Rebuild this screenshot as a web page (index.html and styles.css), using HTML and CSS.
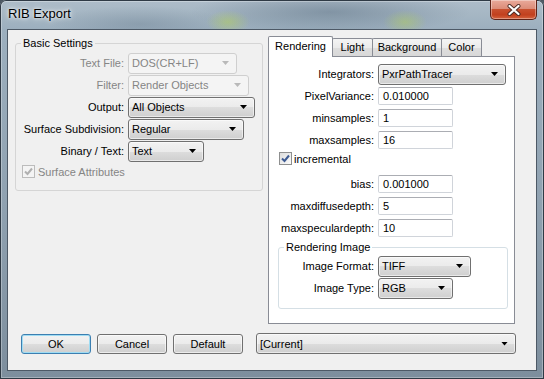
FILE: index.html
```html
<!DOCTYPE html>
<html lang="en">
<head>
    <meta charset="UTF-8">
    <title>RIB Export</title>
    <link rel="stylesheet" href="styles.css">
</head>
<body>
    <div class="window">
        <div class="titlebar">
            <div class="title">RIB Export</div>
            <div class="close-btn">
                <svg width="14" height="12" viewBox="0 0 14 12">
                    <path d="M2.5 2 L11.5 10 M11.5 2 L2.5 10" stroke="#4a2a24" stroke-width="4" stroke-linecap="round"/>
                    <path d="M2.5 2 L11.5 10 M11.5 2 L2.5 10" stroke="#fff" stroke-width="2.2" stroke-linecap="round"/>
                </svg>
            </div>
        </div>

        <div class="client">
            <div class="main">
                <fieldset class="group basic">
                    <legend>Basic Settings</legend>
                    <div class="form-grid">
                        <span class="label disabled">Text File:</span>
                        <div class="combo disabled" style="width: 109px"><span>DOS(CR+LF)</span><i class="arrow"></i></div>

                        <span class="label disabled">Filter:</span>
                        <div class="combo disabled" style="width: 121px"><span>Render Objects</span><i class="arrow"></i></div>

                        <span class="label">Output:</span>
                        <div class="combo" style="width: 127px"><span>All Objects</span><i class="arrow"></i></div>

                        <span class="label">Surface Subdivision:</span>
                        <div class="combo" style="width: 116px"><span>Regular</span><i class="arrow"></i></div>

                        <span class="label">Binary / Text:</span>
                        <div class="combo" style="width: 76px"><span>Text</span><i class="arrow"></i></div>

                        <label class="check-row disabled">
                            <span class="checkbox">
                                <svg width="11" height="11" viewBox="0 0 11 11"><path d="M2 5.5 L4.5 8 L9 2.5" fill="none" stroke-width="2"/></svg>
                            </span>
                            Surface Attributes
                        </label>
                    </div>
                </fieldset>

                <div class="tabs">
                    <div class="tab-strip">
                        <div class="tab active" style="width: 65px">Rendering</div>
                        <div class="tab" style="width: 41px">Light</div>
                        <div class="tab" style="width: 70px">Background</div>
                        <div class="tab" style="width: 41px">Color</div>
                    </div>
                    <div class="tab-panel">
                        <div class="panel-grid">
                            <span class="label">Integrators:</span>
                            <div class="combo" style="width: 128px"><span>PxrPathTracer</span><i class="arrow"></i></div>

                            <span class="label">PixelVariance:</span>
                            <div class="textbox">0.010000</div>

                            <span class="label">minsamples:</span>
                            <div class="textbox">1</div>

                            <span class="label">maxsamples:</span>
                            <div class="textbox">16</div>

                            <label class="check-row incremental">
                                <span class="checkbox">
                                    <svg width="11" height="11" viewBox="0 0 11 11"><path d="M2 5.5 L4.5 8 L9 2.5" fill="none" stroke-width="2"/></svg>
                                </span>
                                incremental
                            </label>

                            <span class="label">bias:</span>
                            <div class="textbox">0.001000</div>

                            <span class="label">maxdiffusedepth:</span>
                            <div class="textbox">5</div>

                            <span class="label">maxspeculardepth:</span>
                            <div class="textbox">10</div>
                        </div>

                        <fieldset class="group image">
                            <legend>Rendering Image</legend>
                            <div class="panel-grid image-grid">
                                <span class="label">Image Format:</span>
                                <div class="combo" style="width: 93px"><span>TIFF</span><i class="arrow"></i></div>

                                <span class="label">Image Type:</span>
                                <div class="combo" style="width: 75px"><span>RGB</span><i class="arrow"></i></div>
                            </div>
                        </fieldset>
                    </div>
                </div>
            </div>

            <div class="footer">
                <button class="btn default">OK</button>
                <button class="btn">Cancel</button>
                <button class="btn">Default</button>
                <div class="combo preset" style="width: 260px"><span>[Current]</span><i class="arrow"></i></div>
            </div>
        </div>
    </div>
</body>
</html>
```

FILE: styles.css
```css
* {
    margin: 0;
    padding: 0;
    box-sizing: border-box;
}

body {
    background: #4b5661;
    font-family: 'Liberation Sans', Arial, sans-serif;
    font-size: 11px;
    color: #000;
}

/* window frame (aero glass) */
.window {
    width: 544px;
    height: 379px;
    display: flex;
    flex-direction: column;
    padding: 0 7px 8px;
    border-radius: 6px 6px 0 0;
    background:
        radial-gradient(ellipse 22px 12px at 228px 22px, rgba(178, 206, 96, 0.55), transparent),
        radial-gradient(ellipse 22px 12px at 405px 22px, rgba(178, 206, 96, 0.5), transparent),
        radial-gradient(ellipse 140px 22px at 330px 12px, rgba(60, 82, 104, 0.35), transparent),
        radial-gradient(ellipse 90px 18px at 140px 24px, rgba(80, 100, 120, 0.25), transparent),
        linear-gradient(180deg, #aebdc9 0, #9cafbe 30px, #90a2b1 200px, #7d8e9d 100%);
    box-shadow: inset 0 0 0 1px #2f3a45, inset 0 0 0 2px rgba(255, 255, 255, 0.3);
}

.titlebar {
    height: 29px;
    display: flex;
    justify-content: space-between;
    align-items: flex-start;
}

.title {
    padding: 7px 0 0 1px;
    font-size: 13px;
    line-height: 14px;
    text-shadow: 0 0 6px #fff, 0 0 3px rgba(255, 255, 255, 0.9);
}

.close-btn {
    width: 47px;
    height: 20px;
    display: flex;
    align-items: center;
    justify-content: center;
    border: 1px solid #5e2318;
    border-top: none;
    border-radius: 0 0 5px 5px;
    background: linear-gradient(180deg, #e9aa9b 0%, #dc8d79 45%, #c8502f 50%, #c2401e 78%, #d5643f 100%);
    box-shadow: inset 0 0 0 1px rgba(255, 255, 255, 0.35);
}

/* client area */
.client {
    flex: 1;
    background: #f0f0f0;
    border: 1px solid #4d5966;
    padding: 6px 0 0 7px;
}

.main {
    display: flex;
    align-items: flex-start;
    height: 287px;
}

.group {
    border: 1px solid #d5d5d5;
    border-radius: 3px;
    min-width: 0;
}

.group legend {
    margin-left: 5px;
    padding: 0 2px;
    line-height: 13px;
}

.basic {
    width: 248px;
    height: 154px;
    margin-top: 1px;
}

.form-grid {
    display: grid;
    grid-template-columns: 108px auto;
    column-gap: 4px;
    grid-auto-rows: 22px;
    align-items: center;
    justify-items: start;
    padding-top: 2px;
}

.label {
    justify-self: end;
    white-space: nowrap;
}

.label.disabled {
    color: #858585;
}

/* combo boxes */
.combo {
    height: 21px;
    display: flex;
    align-items: center;
    padding: 0 7px 0 3px;
    border: 1px solid #707070;
    border-radius: 3px;
    background: linear-gradient(180deg, #f2f2f2 0%, #ebebeb 50%, #dddddd 50%, #cfcfcf 100%);
    box-shadow: inset 0 0 0 1px rgba(255, 255, 255, 0.55);
    white-space: nowrap;
}

.combo .arrow {
    margin-left: auto;
    width: 7px;
    height: 4px;
    background: #000;
    clip-path: polygon(0 0, 100% 0, 50% 100%);
}

.combo.disabled {
    border-color: #cfcfcf;
    background: #f4f4f4;
    box-shadow: none;
    color: #858585;
}

.combo.disabled .arrow {
    background: #b9b9b9;
}

/* text boxes */
.textbox {
    width: 75px;
    height: 18px;
    padding-left: 4px;
    line-height: 17px;
    background: #fff;
    border: 1px solid #d0d4da;
    border-top-color: #abadb3;
    border-radius: 2px;
}

/* check boxes */
.check-row {
    grid-column: 1 / -1;
    display: flex;
    align-items: center;
    gap: 3px;
}

.form-grid .check-row {
    margin-left: 6px;
    align-self: start;
    margin-top: 3px;
}

.checkbox {
    width: 13px;
    height: 13px;
    display: flex;
    align-items: center;
    justify-content: center;
    border: 1px solid #8e8f8f;
    background: linear-gradient(135deg, #dcdcdc, #fbfbfb);
}

.checkbox svg path {
    stroke: #3d5a92;
}

.check-row.disabled {
    color: #858585;
}

.check-row.disabled .checkbox {
    border-color: #bcbcbc;
    background: #f4f4f4;
}

.check-row.disabled .checkbox svg path {
    stroke: #b0b0b0;
}

.incremental {
    margin-left: 4px;
    align-self: start;
    margin-top: 1px;
    gap: 2px;
}

/* tabs */
.tabs {
    width: 247px;
    margin-left: 5px;
}

.tab-strip {
    display: flex;
    align-items: flex-end;
    height: 21px;
}

.tab {
    height: 18px;
    margin-bottom: 1px;
    margin-left: -1px;
    border: 1px solid #898c95;
    border-bottom: none;
    border-radius: 2px 2px 0 0;
    background: linear-gradient(180deg, #f4f4f4 0%, #ebebeb 50%, #dedede 51%, #d8d8d8 100%);
    text-align: center;
    line-height: 17px;
}

.tab.active {
    position: relative;
    z-index: 1;
    height: 21px;
    margin: 0;
    background: #fff;
    line-height: 18px;
}

.tab-panel {
    margin-top: -1px;
    height: 268px;
    padding: 6px 0 0 6px;
    background: #fff;
    border: 1px solid #898c95;
}

.panel-grid {
    display: grid;
    grid-template-columns: 99px auto;
    column-gap: 4px;
    grid-auto-rows: 22px;
    align-items: center;
    justify-items: start;
}

.image {
    width: 230px;
    height: 68px;
    margin: 2px 0 0 3px;
    border-color: #d5dfe5;
}

.image-grid {
    grid-template-columns: 95px auto;
    padding-top: 1px;
}

/* footer */
.footer {
    display: flex;
    align-items: center;
    gap: 6px;
    margin-top: 10px;
    padding-left: 6px;
}

.btn {
    width: 70px;
    height: 20px;
    font-family: inherit;
    font-size: 11px;
    color: #000;
    border: 1px solid #707070;
    border-radius: 3px;
    background: linear-gradient(180deg, #f2f2f2 0%, #ebebeb 50%, #dddddd 50%, #cfcfcf 100%);
    box-shadow: inset 0 0 0 1px rgba(255, 255, 255, 0.6);
}

.btn.default {
    border-color: #3c7fb1;
    box-shadow: inset 0 0 0 1px #9fdcf3;
}

.preset {
    margin-left: 7px;
}
```
